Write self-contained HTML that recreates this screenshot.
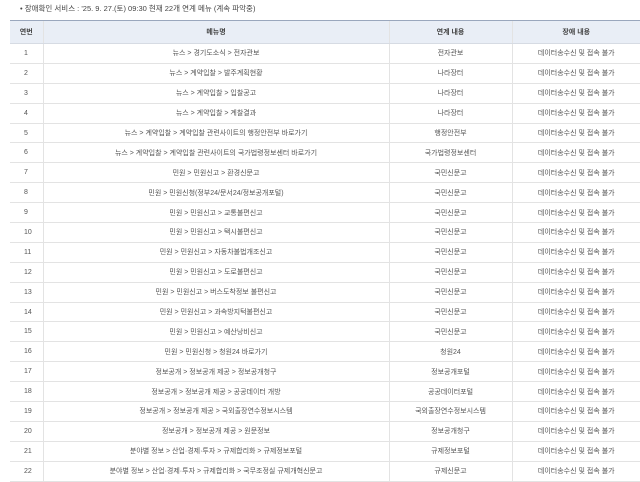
<!DOCTYPE html>
<html><head><meta charset="utf-8"><style>
body{margin:0;background:#fff;width:640px;height:479px;overflow:hidden;font-family:"Liberation Sans","Noto Sans CJK KR",sans-serif;color:#555;}
.t{position:absolute;left:10px;top:20px;border-collapse:collapse;font-size:7px;table-layout:fixed}
.t th{background:#e9eef6;height:20px;font-weight:bold;color:#444;border-top:1px solid #9aa7bd;border-bottom:1px solid #d6dbe3}
.t td{height:18.9px;border-bottom:1px solid #e3e3e3;text-align:center;padding:0}
.t td:first-child{text-align:left;padding-left:14px}
.t th+th,.t td+td{border-left:1px solid #e3e3e3}
.h{position:absolute;left:20px;top:3px;font-size:7.5px;color:#444}
</style></head><body>
<div class="h">• 장애확인 서비스 : '25. 9. 27.(토) 09:30 현재 22개 연계 메뉴 (계속 파악중)</div>
<table class="t">
<colgroup><col style="width:33px"><col style="width:346px"><col style="width:123px"><col style="width:128px"></colgroup>
<tr><th>연번</th><th>메뉴명</th><th>연계 내용</th><th>장애 내용</th></tr>
<tr><td>1</td><td>뉴스 &gt; 경기도소식 &gt; 전자관보</td><td>전자관보</td><td>데이터송수신 및 접속 불가</td></tr>
<tr><td>2</td><td>뉴스 &gt; 계약입찰 &gt; 발주계획현황</td><td>나라장터</td><td>데이터송수신 및 접속 불가</td></tr>
<tr><td>3</td><td>뉴스 &gt; 계약입찰 &gt; 입찰공고</td><td>나라장터</td><td>데이터송수신 및 접속 불가</td></tr>
<tr><td>4</td><td>뉴스 &gt; 계약입찰 &gt; 계찰결과</td><td>나라장터</td><td>데이터송수신 및 접속 불가</td></tr>
<tr><td>5</td><td>뉴스 &gt; 계약입찰 &gt; 계약입찰 관련사이트의 행정안전부 바로가기</td><td>행정안전부</td><td>데이터송수신 및 접속 불가</td></tr>
<tr><td>6</td><td>뉴스 &gt; 계약입찰 &gt; 계약입찰 관련사이트의 국가법령정보센터 바로가기</td><td>국가법령정보센터</td><td>데이터송수신 및 접속 불가</td></tr>
<tr><td>7</td><td>민원 &gt; 민원신고 &gt; 환경신문고</td><td>국민신문고</td><td>데이터송수신 및 접속 불가</td></tr>
<tr><td>8</td><td>민원 &gt; 민원신청(정부24/문서24/정보공개포털)</td><td>국민신문고</td><td>데이터송수신 및 접속 불가</td></tr>
<tr><td>9</td><td>민원 &gt; 민원신고 &gt; 교통불편신고</td><td>국민신문고</td><td>데이터송수신 및 접속 불가</td></tr>
<tr><td>10</td><td>민원 &gt; 민원신고 &gt; 택시불편신고</td><td>국민신문고</td><td>데이터송수신 및 접속 불가</td></tr>
<tr><td>11</td><td>민원 &gt; 민원신고 &gt; 자동차불법개조신고</td><td>국민신문고</td><td>데이터송수신 및 접속 불가</td></tr>
<tr><td>12</td><td>민원 &gt; 민원신고 &gt; 도로불편신고</td><td>국민신문고</td><td>데이터송수신 및 접속 불가</td></tr>
<tr><td>13</td><td>민원 &gt; 민원신고 &gt; 버스도착정보 불편신고</td><td>국민신문고</td><td>데이터송수신 및 접속 불가</td></tr>
<tr><td>14</td><td>민원 &gt; 민원신고 &gt; 과속방지턱불편신고</td><td>국민신문고</td><td>데이터송수신 및 접속 불가</td></tr>
<tr><td>15</td><td>민원 &gt; 민원신고 &gt; 예산낭비신고</td><td>국민신문고</td><td>데이터송수신 및 접속 불가</td></tr>
<tr><td>16</td><td>민원 &gt; 민원신청 &gt; 청원24 바로가기</td><td>청원24</td><td>데이터송수신 및 접속 불가</td></tr>
<tr><td>17</td><td>정보공개 &gt; 정보공개 제공 &gt; 정보공개청구</td><td>정보공개포털</td><td>데이터송수신 및 접속 불가</td></tr>
<tr><td>18</td><td>정보공개 &gt; 정보공개 제공 &gt; 공공데이터 개방</td><td>공공데이터포털</td><td>데이터송수신 및 접속 불가</td></tr>
<tr><td>19</td><td>정보공개 &gt; 정보공개 제공 &gt; 국외출장연수정보시스템</td><td>국외출장연수정보시스템</td><td>데이터송수신 및 접속 불가</td></tr>
<tr><td>20</td><td>정보공개 &gt; 정보공개 제공 &gt; 원문정보</td><td>정보공개청구</td><td>데이터송수신 및 접속 불가</td></tr>
<tr><td>21</td><td>분야별 정보 &gt; 산업·경제·투자 &gt; 규제합리화 &gt; 규제정보포털</td><td>규제정보포털</td><td>데이터송수신 및 접속 불가</td></tr>
<tr><td>22</td><td>분야별 정보 &gt; 산업·경제·투자 &gt; 규제합리화 &gt; 국무조정실 규제개혁신문고</td><td>규제신문고</td><td>데이터송수신 및 접속 불가</td></tr>
</table>
</body></html>
